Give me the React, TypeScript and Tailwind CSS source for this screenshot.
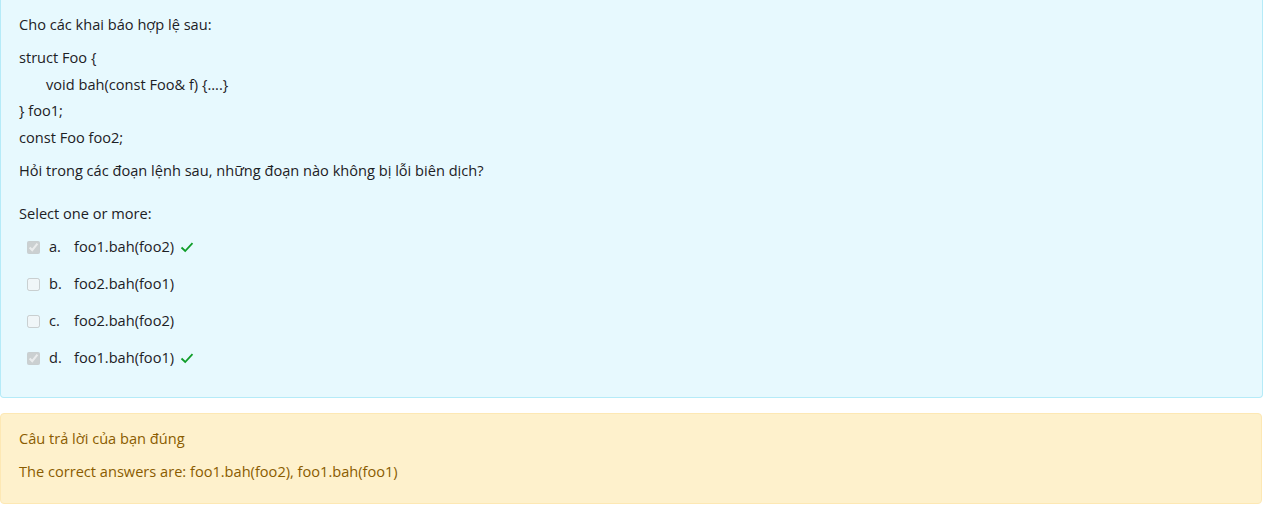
import React from 'react';

type Answer = { letter: string; text: string; checked: boolean; correct: boolean };

const ANSWERS: Answer[] = [
  { letter: 'a.', text: 'foo1.bah(foo2)', checked: true, correct: true },
  { letter: 'b.', text: 'foo2.bah(foo1)', checked: false, correct: false },
  { letter: 'c.', text: 'foo2.bah(foo2)', checked: false, correct: false },
  { letter: 'd.', text: 'foo1.bah(foo1)', checked: true, correct: true },
];

const CheckMark: React.FC = () => (
  <svg width="14" height="14" viewBox="0 0 14 14" className="ml-[6px]">
    <path d="M1.5 7.5 L5.2 11 L12.5 3.2" fill="none" stroke="#0f9d28" strokeWidth="1.8" />
  </svg>
);

const App: React.FC = () => {
  return (
    <div className="font-['Open_Sans',sans-serif] text-[14.6px] bg-white min-h-[506px]">
      <div className="bg-[#e7f9fe] border border-t-0 border-[#b5ebf8] rounded-b-[4px] pl-[18px] pt-[11px] pb-[26px] text-[#1d2125]">
        <div className="leading-[26px]">Cho các khai báo hợp lệ sau:</div>
        <div className="mt-[7px] leading-[26.6px]">
          <div>struct Foo {'{'}</div>
          <div className="pl-[27px]">void bah(const Foo&amp; f) {'{....}'}</div>
          <div>{'}'} foo1;</div>
          <div>const Foo foo2;</div>
        </div>
        <div className="mt-[7px] leading-[26px]">Hỏi trong các đoạn lệnh sau, những đoạn nào không bị lỗi biên dịch?</div>
        <div className="mt-[17px] leading-[26px]">Select one or more:</div>
        <div className="flex flex-col gap-[11px] mt-[8px]">
          {ANSWERS.map((a) => (
            <div key={a.letter} className="flex items-center h-[26px] pl-[8px]">
              <input type="checkbox" checked={a.checked} disabled readOnly className="w-[13px] h-[13px] m-0" />
              <span className="ml-[9px] w-[25px]">{a.letter}</span>
              <span>{a.text}</span>
              {a.correct && <CheckMark />}
            </div>
          ))}
        </div>
      </div>
      <div className="mt-[15px] mr-[1px] bg-[#fef1cc] border border-[#fde8b4] rounded-[4px] pl-[18px] pt-[11px] pb-[19px] text-[#8a5c00]">
        <div className="leading-[26px]">Câu trả lời của bạn đúng</div>
        <div className="mt-[7px] leading-[26px]">The correct answers are: foo1.bah(foo2), foo1.bah(foo1)</div>
      </div>
    </div>
  );
};

export default App;
